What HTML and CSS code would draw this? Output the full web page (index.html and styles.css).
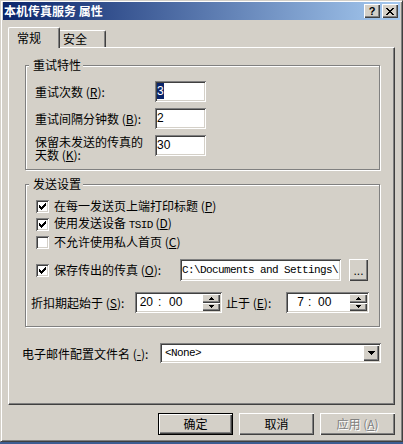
FILE: index.html
```html
<!DOCTYPE html>
<html lang="zh-CN">
<head>
<meta charset="utf-8">
<title>本机传真服务 属性</title>
<link rel="stylesheet" href="styles.css">
</head>
<body>
<div class="window">
  <div class="titlebar">
    <span class="title">本机传真服务 属性</span>
    <div class="tbtns">
      <span class="tbtn help">?</span>
      <span class="tbtn close"><svg width="8" height="7" viewBox="0 0 8 7"><path d="M0 0h2v1h-2zM6 0h2v1h-2zM1 1h2v1h-2zM5 1h2v1h-2zM2 2h4v1h-4zM3 3h2v1h-2zM2 4h4v1h-4zM1 5h2v1h-2zM5 5h2v1h-2zM0 6h2v1h-2zM6 6h2v1h-2z" fill="#000"/></svg></span>
    </div>
  </div>

  <div class="tabs">
    <div class="tab active">常规</div>
    <div class="tab">安全</div>
  </div>

  <div class="panel">
    <div class="group g1">
      <div class="legend">重试特性</div>
      <div class="row first">
        <span class="lbl">重试次数 (<u>R</u>):</span>
        <span class="edit num"><span class="sel">3</span></span>
      </div>
      <div class="row">
        <span class="lbl">重试间隔分钟数 (<u>B</u>):</span>
        <span class="edit num">2</span>
      </div>
      <div class="row tall">
        <span class="lbl two"><span class="line">保留未发送的传真的</span><span class="line">天数 (<u>K</u>):</span></span>
        <span class="edit num">30</span>
      </div>
    </div>

    <div class="group g2">
      <div class="legend">发送设置</div>
      <div class="chkrow first">
        <span class="chk"><svg width="7" height="7" viewBox="0 0 7 7"><path d="M6 0h1v1h-1zM5 1h2v1h-2zM0 2h1v1h-1zM4 2h3v1h-3zM0 3h2v1h-2zM3 3h3v1h-3zM0 4h5v1h-5zM1 5h3v1h-3zM2 6h1v1h-1z" fill="#000"/></svg></span>
        <span>在每一发送页上端打印标题 (<u>P</u>)</span>
      </div>
      <div class="chkrow">
        <span class="chk"><svg width="7" height="7" viewBox="0 0 7 7"><path d="M6 0h1v1h-1zM5 1h2v1h-2zM0 2h1v1h-1zM4 2h3v1h-3zM0 3h2v1h-2zM3 3h3v1h-3zM0 4h5v1h-5zM1 5h3v1h-3zM2 6h1v1h-1z" fill="#000"/></svg></span>
        <span>使用发送设备 <span class="mono">TSID</span> (<u>D</u>)</span>
      </div>
      <div class="chkrow">
        <span class="chk"></span>
        <span>不允许使用私人首页 (<u>C</u>)</span>
      </div>
      <div class="chkrow pathrow">
        <span class="chk"><svg width="7" height="7" viewBox="0 0 7 7"><path d="M6 0h1v1h-1zM5 1h2v1h-2zM0 2h1v1h-1zM4 2h3v1h-3zM0 3h2v1h-2zM3 3h3v1h-3zM0 4h5v1h-5zM1 5h3v1h-3zM2 6h1v1h-1z" fill="#000"/></svg></span>
        <span class="grow">保存传出的传真 (<u>O</u>):</span>
        <span class="edit pathedit">C:\Documents and Settings\</span>
        <span class="raised browse">...</span>
      </div>
      <div class="timerow">
        <span class="tlbl">折扣期起始于 (<u>S</u>):</span>
        <span class="edit time t1">
          <span class="ttext"><span class="hh">20</span><span class="colon">:</span><span class="mm">00</span></span>
          <span class="spin">
            <span class="raised"><svg width="5" height="3" viewBox="0 0 5 3"><path d="M2 0h1v1h1v1h1v1h-5v-1h1v-1h1z" fill="#000"/></svg></span>
            <span class="raised"><svg width="5" height="3" viewBox="0 0 5 3"><path d="M0 0h5v1h-1v1h-1v1h-1v-1h-1v-1h-1z" fill="#000"/></svg></span>
          </span>
        </span>
        <span class="tlbl2">止于 (<u>E</u>):</span>
        <span class="edit time t2">
          <span class="ttext"><span class="hh">7</span><span class="colon">:</span><span class="mm">00</span></span>
          <span class="spin">
            <span class="raised"><svg width="5" height="3" viewBox="0 0 5 3"><path d="M2 0h1v1h1v1h1v1h-5v-1h1v-1h1z" fill="#000"/></svg></span>
            <span class="raised"><svg width="5" height="3" viewBox="0 0 5 3"><path d="M0 0h5v1h-1v1h-1v1h-1v-1h-1v-1h-1z" fill="#000"/></svg></span>
          </span>
        </span>
      </div>
    </div>

    <div class="emailrow">
      <span class="elbl">电子邮件配置文件名 (<u>-</u>):</span>
      <span class="edit combo">
        <span class="ctext">&lt;None&gt;</span>
        <span class="raised dd"><svg width="7" height="4" viewBox="0 0 7 4"><path d="M0 0h7v1h-1v1h-1v1h-1v1h-1v-1h-1v-1h-1v-1h-1z" fill="#000"/></svg></span>
      </span>
    </div>
  </div>

  <div class="buttons">
    <div class="pbtn default">确定</div>
    <div class="pbtn">取消</div>
    <div class="pbtn disabled">应用 (<u>A</u>)</div>
  </div>
</div>
</body>
</html>
```

FILE: styles.css
```css
* { box-sizing: border-box; }

body {
  margin: 0;
  width: 403px;
  height: 444px;
  overflow: hidden;
  background: #3d5d92;
  font-family: "Noto Sans CJK SC", sans-serif;
  font-size: 12px;
  color: #000;
}

.window {
  width: 403px;
  height: 442px;
  background: #d4d0c8;
  border: 1px solid;
  border-color: #d4d0c8 #404040 #404040 #d4d0c8;
  box-shadow: inset 1px 1px #fff, inset -1px -1px #808080;
  padding: 1px 2px 0 2px;
  display: flex;
  flex-direction: column;
}

/* title bar */
.titlebar {
  height: 18px;
  flex: none;
  background: linear-gradient(to right, #0a246a, #a6caf0);
  display: flex;
  align-items: center;
  padding: 0 2px 0 1px;
  color: #fff;
  font-weight: bold;
}
.title { flex: 1; line-height: 18px; white-space: pre; }
.tbtns { display: flex; gap: 2px; }
.tbtn {
  width: 16px;
  height: 14px;
  background: #d4d0c8;
  box-shadow: inset 1px 1px #fff, inset -1px -1px #404040, inset -2px -2px #808080;
  display: flex;
  align-items: center;
  justify-content: center;
  color: #000;
}
.tbtn.help { font: bold 11px "Liberation Sans", sans-serif; line-height: 14px; padding-bottom: 1px; }
.tbtn svg { display: block; }

/* tabs */
.tabs {
  display: flex;
  align-items: flex-end;
  height: 21px;
  margin-top: 7px;
  margin-bottom: -1px;
  padding-left: 5px;
  position: relative;
  z-index: 1;
  flex: none;
}
.tab {
  height: 17px;
  width: 46px;
  margin-bottom: 1px;
  padding-left: 3px;
  line-height: 16px;
  background: #d4d0c8;
  border-top: 1px solid #fff;
  border-right: 1px solid #404040;
  border-top-right-radius: 2px;
  box-shadow: inset -1px 0 #808080;
}
.tab.active {
  height: 21px;
  width: 52px;
  margin-bottom: 0;
  padding-left: 8px;
  padding-top: 2px;
  border-left: 1px solid #fff;
  border-top-left-radius: 2px;
}

/* panel */
.panel {
  height: 358px;
  margin: 0 5px;
  flex: none;
  border: 1px solid;
  border-color: #fff #404040 #404040 #fff;
  box-shadow: inset -1px -1px #808080;
  display: flex;
  flex-direction: column;
}

.group {
  border: 1px solid #808080;
  box-shadow: 1px 1px 0 #fff, inset 1px 1px 0 #fff;
  margin: 0 14px 0 16px;
  display: flex;
  flex-direction: column;
}
.legend {
  width: fit-content;
  height: 14px;
  line-height: 14px;
  margin: -8px 0 0 3px;
  padding: 0 2px 0 4px;
  background: #d4d0c8;
}

/* group 1 */
.g1 { margin-top: 17px; padding-bottom: 8px; }
.g1 .row {
  display: flex;
  align-items: center;
  height: 21px;
  margin: 6px 0 0 9px;
}
.g1 .row.first { margin-top: 9px; }
.g1 .row.tall { align-items: flex-start; height: 26px; }
.lbl { width: 120px; line-height: 14px; }
.lbl.two { display: flex; flex-direction: column; }
.lbl.two .line { display: block; height: 13px; line-height: 13px; white-space: nowrap; }

.edit {
  background: #fff;
  box-shadow: inset 1px 1px #808080, inset -1px -1px #fff, inset 2px 2px #404040, inset -2px -2px #d4d0c8;
}
.num {
  display: block;
  width: 51px;
  height: 21px;
  padding-left: 2px;
  font: 12px "Liberation Sans", sans-serif;
  line-height: 21px;
}
.sel { background: #0a246a; color: #fff; padding: 1px 0 1px 0; }

/* group 2 */
.g2 { margin-top: 14px; padding-bottom: 13px; }
.chkrow {
  display: flex;
  align-items: center;
  height: 18px;
  margin-left: 10px;
  line-height: 14px;
}
.chkrow.first { margin-top: 6px; }
.chk {
  width: 13px;
  height: 13px;
  flex: none;
  margin-right: 5px;
  background: #fff;
  box-shadow: inset 1px 1px #808080, inset -1px -1px #fff, inset 2px 2px #404040, inset -2px -2px #d4d0c8;
  display: flex;
  align-items: center;
  justify-content: center;
}
.chk svg { display: block; }
.mono { font-family: "Liberation Mono", monospace; font-size: 11px; letter-spacing: -0.6px; }

.chkrow.pathrow { height: 22px; margin-top: 8px; margin-right: 11px; }
.grow { flex: 1; }
.pathedit {
  width: 161px;
  height: 22px;
  padding-left: 2px;
  line-height: 22px;
  font-family: "Liberation Mono", monospace;
  font-size: 11px;
  letter-spacing: -0.6px;
  white-space: pre;
  overflow: hidden;
}
.raised {
  background: #d4d0c8;
  box-shadow: inset 1px 1px #fff, inset -1px -1px #404040, inset -2px -2px #808080;
}
.browse {
  width: 19px;
  height: 22px;
  margin-left: 8px;
  text-align: center;
  font: 12px "Liberation Sans", sans-serif;
  line-height: 24px;
}

.timerow {
  display: flex;
  align-items: center;
  height: 21px;
  margin: 11px 0 0 5px;
}
.tlbl { width: 104px; }
.tlbl2 { width: 60px; margin-left: 4px; }
.time {
  display: flex;
  align-items: stretch;
  height: 21px;
  padding: 2px;
}
.t1 { width: 87px; }
.t2 { width: 83px; }
.ttext {
  flex: 1;
  display: flex;
  padding-left: 1px;
  font: 12px "Liberation Sans", sans-serif;
  line-height: 17px;
}
.hh { width: 15px; text-align: right; }
.colon { margin-left: 5px; width: 4px; }
.mm { margin-left: 7px; }
.t2 .colon { margin-left: 4px; }
.t2 .mm { margin-left: 6px; }
.spin {
  width: 18px;
  display: flex;
  flex-direction: column;
}
.spin .raised {
  flex: 1;
  display: flex;
  align-items: center;
  justify-content: center;
}
.spin svg { display: block; }

/* email row */
.emailrow {
  display: flex;
  align-items: center;
  margin: 16px 0 0 13px;
  height: 20px;
}
.elbl { width: 138px; }
.combo {
  display: flex;
  width: 221px;
  height: 20px;
  padding: 2px;
}
.ctext {
  flex: 1;
  padding-left: 3px;
  font-family: "Liberation Mono", monospace;
  font-size: 11px;
  letter-spacing: -0.6px;
  line-height: 16px;
}
.dd {
  width: 16px;
  display: flex;
  align-items: center;
  justify-content: center;
}
.dd svg { display: block; }

/* bottom buttons */
.buttons {
  display: flex;
  justify-content: flex-end;
  gap: 6px;
  margin-top: 8px;
  padding-right: 5px;
}
.pbtn {
  width: 75px;
  height: 22px;
  line-height: 22px;
  text-align: center;
  background: #d4d0c8;
  box-shadow: inset 1px 1px #fff, inset -1px -1px #404040, inset -2px -2px #808080;
}
.pbtn.default {
  box-shadow: inset 0 0 0 1px #000, inset 2px 2px #fff, inset -2px -2px #404040, inset -3px -3px #808080;
}
.pbtn.disabled { color: #808080; text-shadow: 1px 1px 0 #fff; }
```
